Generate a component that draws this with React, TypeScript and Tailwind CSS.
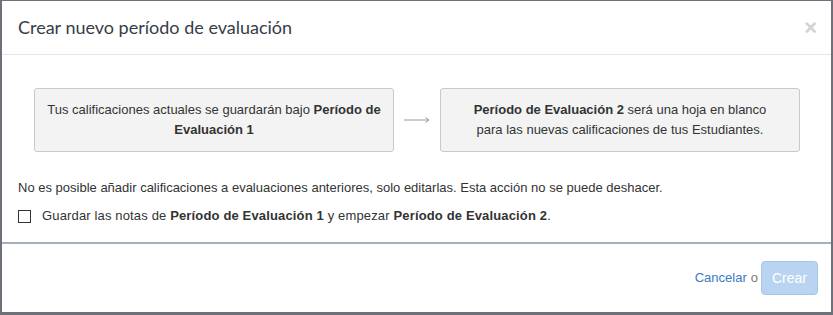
import React from 'react';

const Arrow = () => (
  <svg width="28" height="8" viewBox="0 0 28 8" className="shrink-0">
    <path d="M1 4H26M22.5 1.5L26 4L22.5 6.5" fill="none" stroke="#9a9a9a" strokeWidth="1" />
  </svg>
);

export default function App() {
  return (
    <div className="w-[833px] h-[315px] bg-[#6d717a] pl-[2px] pr-[2px] pt-[1px] pb-[3px]">
      <div className="w-full h-full bg-white flex flex-col font-['Liberation_Sans',Arial,sans-serif] text-[#333]">
        <div className="h-[54px] shrink-0 flex items-center justify-between pl-[16px] pr-[14px] border-b border-[#e5e5e5]">
          <h1 className="font-['Lato',sans-serif] text-[18px] text-[#363d49]">Crear nuevo período de evaluación</h1>
          <span className="text-[#d2d2d2] text-[22px] font-bold leading-none">×</span>
        </div>
        <div className="flex-1 px-[16px] pt-[33px]">
          <div className="flex items-center justify-between pl-[16px] pr-[15px]">
            <div className="w-[360px] h-[64px] bg-[#f3f3f4] border border-[#c9c9c9] rounded-[3px] flex items-center justify-center text-center text-[13px] leading-[20px] px-[6px]">
              <p>Tus calificaciones actuales se guardarán bajo <b>Período de Evaluación 1</b></p>
            </div>
            <Arrow />
            <div className="w-[360px] h-[64px] bg-[#f3f3f4] border border-[#c9c9c9] rounded-[3px] flex items-center justify-center text-center text-[13px] leading-[20px] px-[30px]">
              <p><b>Período de Evaluación 2</b> será una hoja en blanco para las nuevas calificaciones de tus Estudiantes.</p>
            </div>
          </div>
          <p className="mt-[26px] text-[13px] leading-[19px]">No es posible añadir calificaciones a evaluaciones anteriores, solo editarlas. Esta acción no se puede deshacer.</p>
          <label className="mt-[10px] flex items-center text-[13px] leading-[18px] tracking-[0.15px]">
            <span className="w-[13px] h-[13px] border border-[#333] bg-white mr-[11px]"></span>
            <span>Guardar las notas de <b>Período de Evaluación 1</b> y empezar <b>Período de Evaluación 2</b>.</span>
          </label>
        </div>
        <div className="h-[2px] bg-[#a7afba] shrink-0"></div>
        <div className="h-[68px] shrink-0 flex items-center justify-end pr-[13px] text-[13px]">
          <a className="text-[#3b7ac3]">Cancelar</a>
          <span className="text-[#777] ml-[4px] mr-[3px]">o</span>
          <button className="h-[34px] w-[57px] bg-[#b9d4f0] border border-[#a6c5e8] rounded-[4px] text-white text-[14px]">Crear</button>
        </div>
      </div>
    </div>
  );
}
